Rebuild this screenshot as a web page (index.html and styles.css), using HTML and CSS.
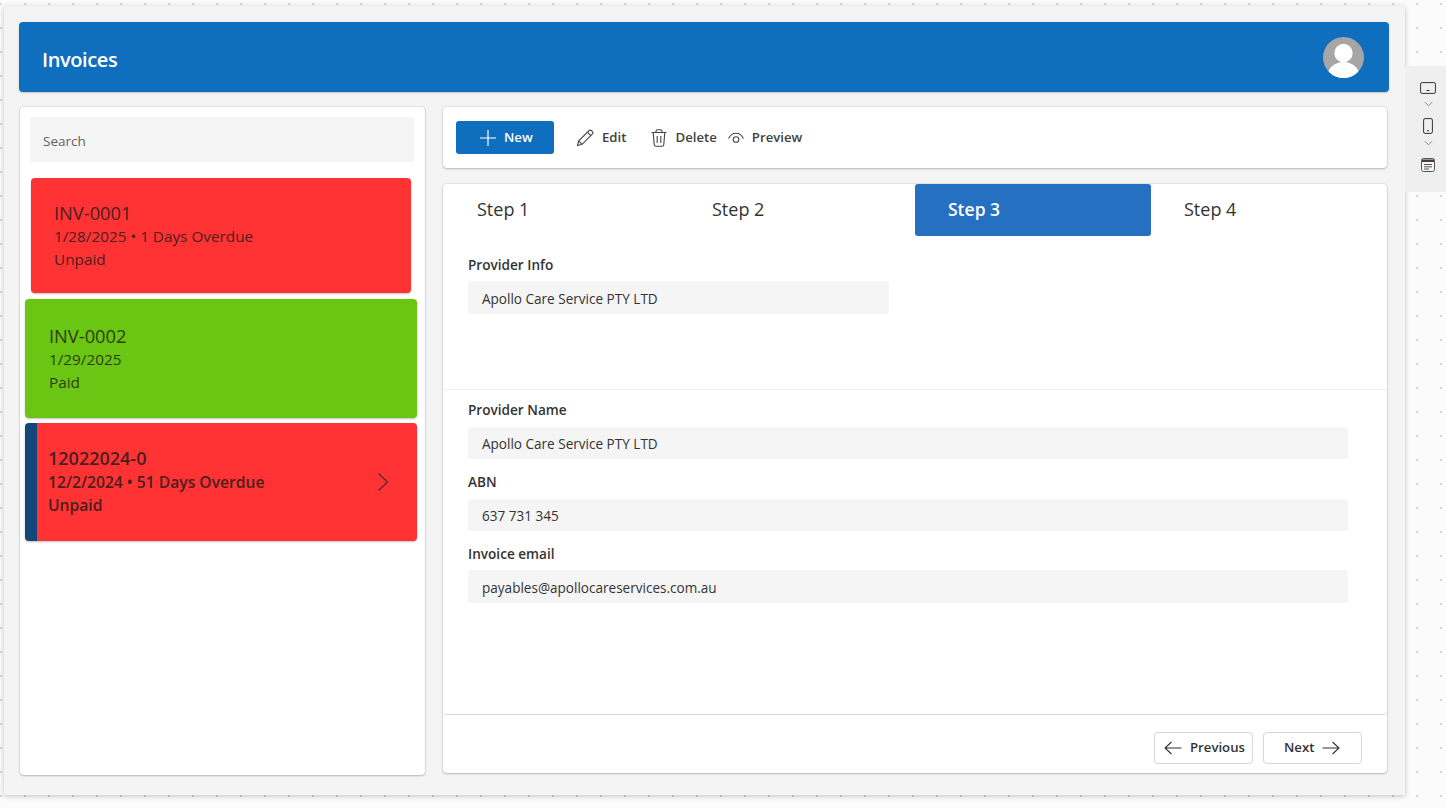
FILE: index.html
```html
<!DOCTYPE html>
<html lang="en">
<head>
<meta charset="utf-8">
<title>Invoices</title>
<link rel="stylesheet" href="styles.css">
</head>
<body>
<div class="canvas">
  <div class="app">
    <header class="appbar">
      <h1>Invoices</h1>
      <svg class="avatar" viewBox="0 0 41 41"><defs><clipPath id="c"><circle cx="20.5" cy="20.5" r="20.5"/></clipPath></defs><circle cx="20.5" cy="20.5" r="20.5" fill="#a6a6a6"/><g clip-path="url(#c)" fill="#fff"><circle cx="20.5" cy="16" r="9.2"/><ellipse cx="20.5" cy="38" rx="15.5" ry="13"/></g></svg>
    </header>
    <div class="columns">
      <aside class="panel list">
        <div class="search">Search</div>
        <div class="card red first">
          <div class="id">INV-0001</div>
          <div>1/28/2025 • 1 Days Overdue</div>
          <div>Unpaid</div>
        </div>
        <div class="card green">
          <div class="id">INV-0002</div>
          <div>1/29/2025</div>
          <div>Paid</div>
        </div>
        <div class="card red selected">
          <div class="id">12022024-0</div>
          <div>12/2/2024 • 51 Days Overdue</div>
          <div>Unpaid</div>
          <svg class="chev" viewBox="0 0 12 20"><path d="M1.5 1.5 10.5 10l-9 8.5" fill="none" stroke="#5a2a3a" stroke-width="1.3"/></svg>
        </div>
      </aside>
      <main class="right">
        <div class="panel toolbar">
          <button class="btn-new"><svg viewBox="0 0 16 16"><path d="M8 0v16M0 8h16" stroke="#fff" stroke-width="1.2" fill="none"/></svg><span>New</span></button>
          <button class="tool edit"><svg viewBox="0 0 18 18"><path d="M1.5 16.5l1.2-4.6L12.8 1.8c.8-.8 2.1-.8 2.9 0l.5.5c.8.8.8 2.1 0 2.9L6.1 15.3zM2.7 11.9l3.4 3.4M11.4 3.2l3.4 3.4" fill="none" stroke="#444" stroke-width="1.1"/></svg><span>Edit</span></button>
          <button class="tool del"><svg viewBox="0 0 16 18"><path d="M.5 3.5h15M5 3.5V2.2C5 1.3 5.7.7 6.5.7h3c.8 0 1.5.6 1.5 1.5v1.3M2.2 3.5l1 12c.1 1 .8 1.8 1.8 1.8h6c1 0 1.7-.8 1.8-1.8l1-12M6.2 7v7M9.8 7v7" fill="none" stroke="#444" stroke-width="1.1"/></svg><span>Delete</span></button>
          <button class="tool prev"><svg viewBox="0 0 16 12"><path d="M.6 6.5C2.2 3 5 1.2 8 1.2s5.8 1.8 7.4 5.3" fill="none" stroke="#444" stroke-width="1.1"/><circle cx="8" cy="7.5" r="2.8" fill="none" stroke="#444" stroke-width="1.1"/></svg><span>Preview</span></button>
        </div>
        <div class="panel wizard">
          <div class="tabs">
            <div class="tab">Step 1</div>
            <div class="tab">Step 2</div>
            <div class="tab active">Step 3</div>
            <div class="tab">Step 4</div>
          </div>
          <section class="sec-info">
            <label>Provider Info</label>
            <div class="input short">Apollo Care Service PTY LTD</div>
          </section>
          <section class="sec-detail">
            <label>Provider Name</label>
            <div class="input">Apollo Care Service PTY LTD</div>
            <label>ABN</label>
            <div class="input">637 731 345</div>
            <label>Invoice email</label>
            <div class="input">payables@apollocareservices.com.au</div>
          </section>
          <footer class="wizard-foot">
            <button class="nav nav-prev"><svg viewBox="0 0 18 14"><path d="M7.500 1 1 7l6.500 6M1 7h16.500" fill="none" stroke="#333" stroke-width="1.1"/></svg><span>Previous</span></button>
            <button class="nav nav-next"><span>Next</span><svg viewBox="0 0 18 14"><path d="M10.500 1 17 7l-6.500 6M17 7H.5" fill="none" stroke="#333" stroke-width="1.1"/></svg></button>
          </footer>
        </div>
      </main>
    </div>
  </div>
  <div class="rail">
    <svg class="r-land" viewBox="0 0 16 12"><rect x=".6" y=".6" width="14.800" height="10.800" rx="1.500" fill="none" stroke="#333" stroke-width="1"/><path d="M6.500 8.500h3" stroke="#333" stroke-width="1"/></svg>
    <svg class="r-chev" viewBox="0 0 10 6"><path d="M1 1l4 4 4-4" fill="none" stroke="#777" stroke-width=".9"/></svg>
    <svg class="r-phone" viewBox="0 0 10 16"><rect x=".6" y=".6" width="8.800" height="14.800" rx="1.500" fill="none" stroke="#333" stroke-width="1"/><path d="M4 12.800h2" stroke="#333" stroke-width="1"/></svg>
    <svg class="r-chev" viewBox="0 0 10 6"><path d="M1 1l4 4 4-4" fill="none" stroke="#777" stroke-width=".9"/></svg>
    <svg class="r-cal" viewBox="0 0 14 14"><rect x=".5" y=".5" width="13" height="13" rx="2" fill="#f4f4f4" stroke="#555" stroke-width="1"/><path d="M1 1.500h12v2.500H1z" fill="#4a3a3a"/><path d="M3 6.500h8M3 8.800h8M3 11h5" stroke="#555" stroke-width="1"/></svg>
  </div>
</div>
</body>
</html>
```
FILE: styles.css
```css
* { box-sizing: border-box; }
html, body { margin: 0; height: 100%; overflow: hidden; }
body { font-family: "Open Sans", "Noto Sans", "Liberation Sans", sans-serif; color: #242424; }
.canvas {
  width: 1446px; height: 808px; display: flex; align-items: flex-start;
  padding: 6px 0 0 4px;
  background-color: #fbfbfb;
  background-image: radial-gradient(circle at 1px 1px, #d4d4d4 0.9px, transparent 1.1px);
  background-size: 24px 24px;
  background-position: 0 3px;
}
.app {
  width: 1401px; height: 789px; background: #f4f4f4;
  padding: 16px 16px 0 15px;
  box-shadow: 0 1px 5px rgba(0,0,0,.22);
}
.appbar {
  width: 1370px; height: 70px; background: #106ebe; border-radius: 4px;
  display: flex; align-items: center; justify-content: space-between;
  padding: 0 25px 0 23px;
  box-shadow: 0 1px 2px rgba(0,0,0,.2);
}
.appbar h1 { margin: 4px 0 0; font-size: 20px; font-weight: 600; color: #fff; letter-spacing: -.4px; }
.avatar { width: 41px; height: 41px; }
.columns { display: flex; gap: 18px; margin: 15px 0 0 1px; }
.panel { background: #fff; border-radius: 4px; box-shadow: 0 0 2px rgba(0,0,0,.22), 0 1px 2px rgba(0,0,0,.2); }
.list { width: 405px; height: 668px; padding: 10px 8px 0 5px; }
.search {
  margin: 0 3px 0 5px; height: 45px; background: #f5f5f5; border-radius: 3px;
  padding: 14px 0 0 13px; font-size: 13.5px; line-height: 20px; color: #616161;
}
.card {
  position: relative; border-radius: 4px; font-size: 15.300px; line-height: 23px; color: #4a1f1f;
  box-shadow: 0 1px 2px rgba(0,0,0,.25);
}
.card .id { font-size: 18.300px; line-height: 25px; }
.red { background: #ff3333; }
.green { background: #6bc613; color: #2b3d14; height: 119px; margin-top: 6px; padding: 24px 0 0 24px; }
.first { margin: 16px 6px 0 6px; height: 115px; padding: 22px 0 0 23px; }
.selected { font-weight: 600; font-size: 15.650px; border-left: 12px solid #14467a; padding: 23px 0 0 11px; height: 118px; margin-top: 5px; }
.selected .id { font-size: 18px; }
.chev { position: absolute; right: 28px; top: 49px; width: 12px; height: 20px; }
.right { width: 944px; }
.toolbar { height: 61px; display: flex; align-items: center; padding: 0 0 0 13px; }
button { font-family: inherit; font-weight: 600; font-size: 13.200px; border: 0; background: none; padding: 0; color: #424242; display: flex; align-items: center; }
button span { position: relative; top: -1px; }
.btn-new { width: 98px; height: 33px; background: #106ebe; color: #fff; border-radius: 3px; padding-left: 24px; }
.btn-new svg { width: 16px; height: 16px; margin-right: 8px; }
.tool svg { margin-right: 8px; }
.edit { margin-left: 22px; } .edit svg { width: 18px; height: 18px; }
.del { margin-left: 25px; } .del svg { width: 16px; height: 18px; }
.prev { margin-left: 11px; } .prev svg { width: 16px; height: 12px; }
.wizard { height: 589px; margin-top: 16px; display: flex; flex-direction: column; }
.tabs { display: grid; grid-template-columns: repeat(4, 236px); height: 52px; }
.tab { padding: 12px 0 0 33px; font-size: 18px; line-height: 26px; color: #333; }
.tab:first-child { padding-left: 34px; }
.active { background: #2570c0; color: #fff; font-weight: 600; border-radius: 3px; font-size: 17.500px; }
label { display: block; font-size: 13.600px; font-weight: 600; line-height: 18px; color: #333; margin-left: 25px; }
.input {
  height: 32px; margin: 8px 39px 0 25px; padding: 0 0 0 14px; background: #f5f5f5; border-radius: 3px;
  font-size: 13.550px; line-height: 34px; color: #333;
}
.short { width: 421px; height: 33px; margin: 7px 0 0 25px; line-height: 36px; }
.sec-info { height: 154px; padding-top: 20px; border-bottom: 1px solid #f0f0f0; }
.sec-detail { height: 325px; padding-top: 11px; border-bottom: 1px solid #d8d8d8; border-radius: 0 0 4px 4px; }
.sec-detail .input + label { margin-top: 14px; }
.sec-detail .input:last-child { height: 33px; margin-top: 7px; line-height: 36px; }
.wizard-foot { display: flex; justify-content: flex-end; gap: 10px; padding: 17px 25px 0 0; }
.nav { width: 99px; height: 32px; border: 1px solid #d6d6d6; border-radius: 4px; color: #333; background: #fff; }
.nav svg { width: 18px; height: 14px; }
.nav-prev { padding-left: 9px; }
.nav-prev svg { margin-right: 8px; }
.nav-next { padding-left: 20px; }
.nav-next svg { margin-left: 8px; }
.rail {
  width: 41px; height: 126px; margin-top: 60px; background: #efefef;
  display: flex; flex-direction: column; align-items: center; padding: 16px 0 0 5px;
}
.rail svg { display: block; flex: none; }
.r-land { width: 16px; height: 12px; }
.r-chev { width: 9px; height: 6px; margin: 7px 0 11px; }
.r-phone { width: 10px; height: 16px; }
.r-phone + .r-chev { margin: 6px 0 12px; }
.r-cal { width: 14px; height: 14px; }
```
